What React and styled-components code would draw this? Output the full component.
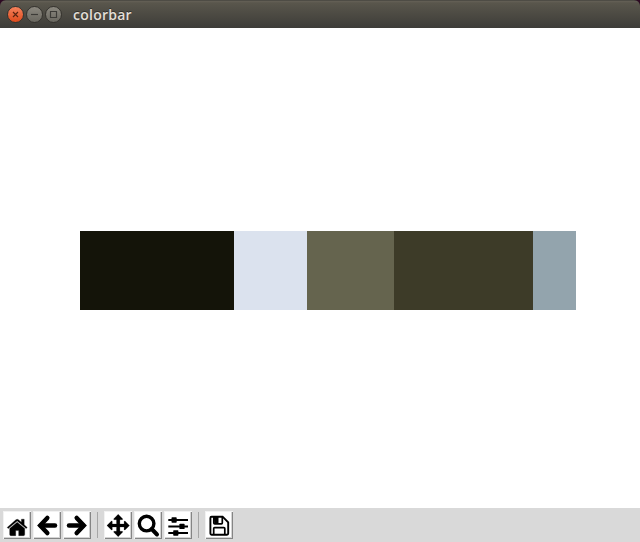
import React from "react";
import styled, { createGlobalStyle } from "styled-components";

const GlobalStyle = createGlobalStyle`
  * { box-sizing: border-box; }
  body { margin: 0; background: #2c0a22; }
`;

const Window = styled.main`
  display: flex;
  flex-direction: column;
  width: 640px;
  height: 542px;
  overflow: hidden;
`;

const TitleBar = styled.header`
  display: flex;
  align-items: center;
  height: 28px;
  padding: 0 7px;
  border-radius: 6px 6px 0 0;
  background: linear-gradient(#4e4c45 0, #4e4c45 1px, #656157 1px, #59564c 3px, #3d3c38 100%);
`;

const Controls = styled.div`
  display: flex;
  gap: 2px;
`;

const Control = styled.button`
  width: 17px;
  height: 17px;
  padding: 0;
  border: 1px solid #35332e;
  border-radius: 50%;
  background: ${(p) => (p.$close ? "linear-gradient(#f5825c, #df4b1c)" : "linear-gradient(#8b887f, #69675f)")};
  svg { display: block; }
`;

const Title = styled.h1`
  margin: 1px 0 0 11px;
  font: 600 14px/20px "Open Sans", "Noto Sans", sans-serif;
  letter-spacing: 0.25px;
  color: #e3dfd7;
  text-shadow: 0 -1px #302f2b;
`;

const Canvas = styled.section`
  flex: 1;
  padding: 203px 64px 0 80px;
  background: #fff;
`;

const ColorBar = styled.div`
  display: flex;
  height: 79px;
`;

const Swatch = styled.div`
  flex: 0 0 ${(p) => p.$width}px;
  background: ${(p) => p.$color};
`;

const Toolbar = styled.footer`
  display: flex;
  align-items: flex-start;
  gap: 2px;
  height: 34px;
  padding: 3px;
  background: #d9d9d9;
`;

const ToolButton = styled.button`
  width: 28px;
  height: 28px;
  padding: 0;
  border: 0;
  background: #fff;
  box-shadow: inset 1px 1px #f2f2f2, inset -1px -1px #858585, inset -2px -2px #d4d4d4;
  svg { display: block; }
`;

const Separator = styled.div`
  width: 1px;
  height: 26px;
  margin: 1px 4px 0;
  background: #a6a6a6;
`;

const swatches = [
  [154, "#141409"],
  [73, "#dbe2ee"],
  [87, "#65644e"],
  [139, "#3d3b28"],
  [43, "#93a4ad"],
];

const icons = {
  Home: (
    <g stroke="#000" strokeWidth=".3">
      <path d="M14.2 11.2 6.7 17.4v6.2q0 1.1 1.1 1.1h4.9v-5.1h3v5.1h4.9q1.1 0 1.1-1.1v-6.2Z" />
      <path d="M4.2 16.4 12.9 8.8q1.3-1.1 2.6 0l2.9 2.5V8.2h2.8v5.6l3 2.6-1 1.2-9-7.6-9 7.6Z" />
    </g>
  ),
  Back: (
    <g fill="none" stroke="#000" strokeWidth="4.5">
      <path d="m14.3 7-7.1 7.5 7.1 7.5" strokeLinecap="round" strokeLinejoin="miter" />
      <path d="M8 14.5h14" strokeLinecap="round" />
    </g>
  ),
  Forward: (
    <g fill="none" stroke="#000" strokeWidth="4.5">
      <path d="m13.7 7 7.1 7.5-7.1 7.5" strokeLinecap="round" strokeLinejoin="miter" />
      <path d="M20 14.5H6" strokeLinecap="round" />
    </g>
  ),
  Pan: <path d="m14.2 3.3 4.4 4.5q.5.9-.5.9h-2.2v4.2h4.2v-2.2q0-1 .9-.6l4.5 4.4-4.5 4.4q-.9.5-.9-.5v-2.3h-4.2v4.2h2.2q1 0 .5.9l-4.4 4.5-4.4-4.5q-.5-.9.5-.9h2.2v-4.2H8.3v2.3q0 1-.9.5l-4.5-4.4 4.5-4.4q.9-.4.9.6v2.2h4.2V8.7h-2.2q-1 0-.5-.9Z" stroke="#000" strokeWidth=".2" />,
  Zoom: (
    <g fill="none" stroke="#000" strokeWidth="3.4">
      <circle cx="12.6" cy="12.6" r="7.3" />
      <path d="m17.7 18 5.3 5.5" strokeWidth="4" strokeLinecap="round" />
    </g>
  ),
  Configure: (
    <>
      <path d="M4.3 8h19.7v2H4.3zM4.3 14.4h19.7v2H4.3zM4.3 21h19.7v2H4.3z" />
      <rect x="7.5" y="6.3" width="5.2" height="5.4" rx=".7" />
      <rect x="15.4" y="12.7" width="5.2" height="5.4" rx=".7" />
      <rect x="9.2" y="19.3" width="5.2" height="5.4" rx=".7" />
    </>
  ),
  Save: (
    <>
      <path d="M6.6 5.7h11l5.6 5.6v11.3q0 1.2-1.2 1.2H6.6q-1.2 0-1.2-1.2V6.9q0-1.2 1.2-1.2Z" fill="none" stroke="#000" strokeWidth="1.9" />
      <path d="M8.7 23.5v-6q0-.9.9-.9h9.3q.9 0 .9.9v6M8.8 6v6q0 .9.9.9h6.7q.9 0 .9-.9V6" fill="none" stroke="#000" strokeWidth="1.7" />
      <path d="M8.8 5.5h4.7v7H9.3z" />
    </>
  ),
};

function Tool({ name }) {
  return (
    <ToolButton aria-label={name}>
      <svg width="28" height="28" viewBox="0 0 28 28">{icons[name]}</svg>
    </ToolButton>
  );
}

function WindowControl({ label, close, d }) {
  return (
    <Control aria-label={label} $close={close}>
      <svg width="15" height="15" viewBox="0 0 15 15">
        <path d={d} fill="none" stroke={close ? "#5b2410" : "#3c3b37"} strokeWidth="1.15" />
      </svg>
    </Control>
  );
}

export default function App() {
  return (
    <>
      <GlobalStyle />
      <Window>
        <TitleBar>
          <Controls>
            <WindowControl label="Close" close d="m5 5 5 5m0-5-5 5" />
            <WindowControl label="Minimize" d="M4 7.5h7" />
            <WindowControl label="Maximize" d="M4.5 4.5h6v6h-6z" />
          </Controls>
          <Title>colorbar</Title>
        </TitleBar>
        <Canvas>
          <ColorBar>
            {swatches.map(([width, color]) => <Swatch key={color} $width={width} $color={color} />)}
          </ColorBar>
        </Canvas>
        <Toolbar>
          <Tool name="Home" />
          <Tool name="Back" />
          <Tool name="Forward" />
          <Separator />
          <Tool name="Pan" />
          <Tool name="Zoom" />
          <Tool name="Configure" />
          <Separator />
          <Tool name="Save" />
        </Toolbar>
      </Window>
    </>
  );
}
